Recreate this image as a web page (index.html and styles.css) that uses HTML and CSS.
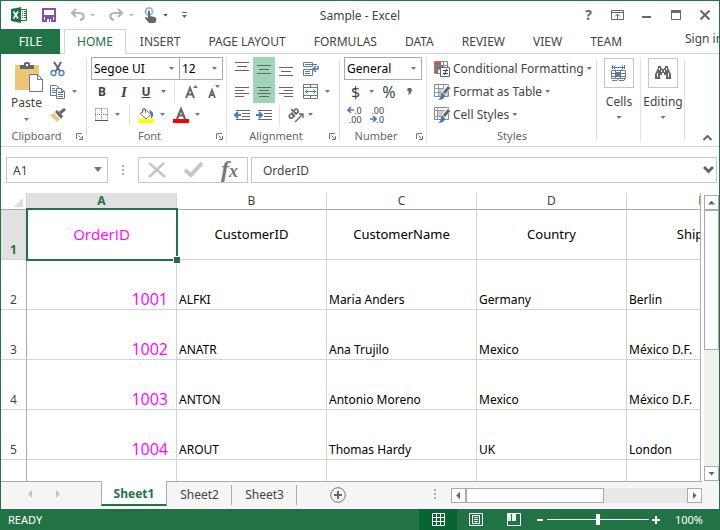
FILE: index.html
```html
<!DOCTYPE html>
<html lang="en">
<head>
<meta charset="utf-8">
<title>Sample - Excel</title>
<link rel="stylesheet" href="styles.css">
</head>
<body>
<div class="window">
  <header class="titlebar">
    <div class="quick">
      <svg class="logo" width="17" height="16" viewBox="0 0 17 16"><path fill="#217346" d="M0 2 10 0v16L0 14z"/><path fill="none" stroke="#217346" d="M10 2.500h5.500v11H10"/><path stroke="#217346" d="M11 4.500h1m1 0h2M11 6.500h1m1 0h2M11 8.500h1m1 0h2M11 10.500h1m1 0h2"/><path stroke="#fff" stroke-width="1.600" d="m2.500 4.500 4.500 7M7 4.500l-4.500 7"/></svg>
      <button class="qbtn" aria-label="Save"><svg width="14" height="14" viewBox="0 0 14 14"><path fill="none" stroke="#8250a8" stroke-width="2" d="M1 1h12v12H1z"/><path fill="#8250a8" d="M1 7h12v2H1zM3 9h8v4H3z"/><path fill="#fff" d="M5 11h2v3H5zM8 11h1v3H8z"/></svg></button>
      <button class="qbtn split" aria-label="Undo"><svg width="15" height="14" viewBox="0 0 15 14"><path fill="none" stroke="#b4b4b4" stroke-width="2.200" d="M6 1 2 5l4 4M2 5h7c6 0 6 6 1 7"/></svg><i class="caret pale"></i></button>
      <button class="qbtn split" aria-label="Redo"><svg width="15" height="14" viewBox="0 0 15 14"><path fill="none" stroke="#b4b4b4" stroke-width="2.200" d="m9 1 4 4-4 4M13 5H6C0 5 0 11 5 12"/></svg><i class="caret pale"></i></button>
      <button class="qbtn split touch" aria-label="Touch mode"><svg width="13" height="16" viewBox="0 0 13 16"><circle cx="5" cy="4.500" r="3.500" fill="none" stroke="#9dbbd8" stroke-width="2"/><path fill="#666" d="M4 4q1-1 2 0v5l5 1q2 1 1 4l-1 2H5L1 11q0-1 1-1l2 1z"/></svg><i class="caret dark"></i></button>
      <button class="qbtn" aria-label="Customize"><svg width="6" height="6" viewBox="0 0 6 6"><path fill="#666" d="M0 0h5v1H0zM0 3h5L2.500 6z"/></svg></button>
    </div>
    <div class="caption">Sample - Excel</div>
    <div class="wincontrols">
      <button class="help" aria-label="Help">?</button>
      <button aria-label="Ribbon options"><svg width="13" height="10" viewBox="0 0 13 10"><path fill="none" stroke="#666" d="M.5.5h12v9H.5zM1 2.500h11M6.500 9V4M4 6.500l2.500-2.500L9 6.500"/></svg></button>
      <button aria-label="Minimize"><svg width="10" height="10" viewBox="0 0 10 10"><path fill="#666" d="M0 6h9v2H0z"/></svg></button>
      <button aria-label="Maximize"><svg width="10" height="10" viewBox="0 0 10 10"><path fill="none" stroke="#666" d="M.5.5h9v9H.5z"/><path fill="#666" d="M0 0h10v3H0z"/></svg></button>
      <button aria-label="Close"><svg width="10" height="10" viewBox="0 0 10 10"><path stroke="#666" stroke-width="2" d="m.5.5 9 9M9.500.5l-9 9"/></svg></button>
    </div>
  </header>

  <nav class="tabs">
    <button class="file">FILE</button>
    <button class="tab active">HOME</button>
    <button class="tab">INSERT</button>
    <button class="tab">PAGE LAYOUT</button>
    <button class="tab">FORMULAS</button>
    <button class="tab">DATA</button>
    <button class="tab">REVIEW</button>
    <button class="tab">VIEW</button>
    <button class="tab">TEAM</button>
    <a class="signin" href="#">Sign in</a>
  </nav>

  <section class="ribbon">
    <div class="group clipboard">
      <div class="body clipbody">
        <button class="paste"><svg width="28" height="31" viewBox="0 0 28 31"><path fill="#eec679" d="M0 3h24v25H0z"/><path fill="#666" d="M5 3h4V1q3-2 6 0v2h4v4H5z"/><path fill="#fff" d="M11 2h2v2h-2z"/><path fill="#fff" stroke="#777" d="M14.500 12.500h8l5 5v12h-13z"/><path fill="none" stroke="#777" d="M22.500 12.500v5h5"/></svg><span>Paste</span><i class="caret"></i></button>
        <div class="rows">
          <div class="row"><button aria-label="Cut"><svg width="16" height="16" viewBox="0 0 16 16"><path stroke="#666" stroke-width="2" d="m4 1 6 9M11 1 6 10"/><g fill="none" stroke="#4a7eb0" stroke-width="1.300"><circle cx="3.500" cy="12" r="2.500"/><circle cx="11.500" cy="12" r="2.500"/></g></svg></button></div>
          <div class="row"><button class="split" aria-label="Copy"><svg width="16" height="14" viewBox="0 0 16 14"><path fill="#fff" stroke="#777" d="M.5.5h6l3 3v7h-9z"/><path stroke="#4a7eb0" d="M2 3.500h3M2 5.500h4M2 7.500h4"/><path fill="#fff" stroke="#777" d="M6.500 3.500h5l3 3v7h-8z"/><path fill="none" stroke="#777" d="M11.500 3.500v3h3"/><path stroke="#4a7eb0" d="M8 7.500h5M8 9.500h5M8 11.500h5"/></svg><i class="caret"></i></button></div>
          <div class="row"><button aria-label="Format painter"><svg width="16" height="14" viewBox="0 0 16 14"><path fill="#eec679" d="m0 7 4-2 6 6-3 3z"/><path fill="#666" d="m5 4 2-2 6 6-2 3z"/><path stroke="#fff" d="m4.500 4.500 6 6.500"/><path stroke="#666" stroke-width="3" d="m10 5 5-4"/></svg></button></div>
        </div>
      </div>
      <div class="foot"><span>Clipboard</span><button class="launch" aria-label="Clipboard settings"><svg width="7" height="7" viewBox="0 0 7 7"><path fill="none" stroke="#777" d="M.5 6V.5H6M2.500 2.500l3 3M6.500 3v3.500H3"/></svg></button></div>
    </div>

    <div class="group font">
      <div class="body">
        <div class="row pickers">
          <label class="pick family"><select aria-label="Font"><option>Segoe UI</option></select></label>
          <label class="pick size"><select aria-label="Font size"><option>12</option></select></label>
        </div>
        <div class="row styles-row">
          <button class="letter bold">B</button><button class="letter italic">I</button><button class="letter underline">U</button><i class="caret"></i>
          <span class="rule"></span>
          <button aria-label="Grow font"><svg width="14" height="14" viewBox="0 0 14 14"><path fill="none" stroke="#666" stroke-width="2" d="m1 13 4-10L9 13M2.500 9.500h5"/><path fill="#4a7eb0" d="m8 3 2.500-3L13 3z"/></svg></button>
          <button class="shrink" aria-label="Shrink font"><svg width="13" height="14" viewBox="0 0 13 14"><path fill="none" stroke="#666" stroke-width="1.800" d="m1 13 3-8L7 13M2 10h4"/><path fill="#4a7eb0" d="m7 0 2.500 3L12 0z"/></svg></button>
        </div>
        <div class="row fill-row">
          <button class="split" aria-label="Borders"><svg width="14" height="14" viewBox="0 0 14 14"><path fill="none" stroke="#777" stroke-dasharray="1 1" d="M.5.5h12v12M.5.5v12M6.500 0v12M0 6.500h13"/><path stroke="#555" d="M0 12.500h13"/></svg><i class="caret"></i></button>
          <span class="rule"></span>
          <button class="split" aria-label="Fill color"><svg width="16" height="16" viewBox="0 0 16 16"><path fill="#fff" stroke="#777" d="m2 6.500 5-4 6 5-5 4.500z"/><path fill="none" stroke="#777" d="M4.500 6V2q1.500-2 3 0v4"/><path fill="#4a7eb0" d="M11 3q5 1 4 6l-2 3V8z"/><path fill="#ff0" d="M0 12h16v4H0z"/></svg><i class="caret"></i></button>
          <button class="split" aria-label="Font color"><svg width="16" height="16" viewBox="0 0 16 16"><path fill="none" stroke="#666" stroke-width="2.200" d="m4 12 4-10 4 10M5.500 8.500h5"/><path fill="red" d="M0 12h16v4H0z"/></svg><i class="caret"></i></button>
        </div>
      </div>
      <div class="foot"><span>Font</span><button class="launch" aria-label="Font settings"><svg width="7" height="7" viewBox="0 0 7 7"><path fill="none" stroke="#777" d="M.5 6V.5H6M2.500 2.500l3 3M6.500 3v3.500H3"/></svg></button></div>
    </div>

    <div class="group align">
      <div class="body">
        <div class="row">
          <button class="al" aria-label="Top align"><svg width="15" height="14" viewBox="0 0 15 14"><path stroke="#666" d="M0 .5h14M2 4.500h10M0 8.500h14" /></svg></button>
          <button class="al on" aria-label="Middle align"><svg width="15" height="14" viewBox="0 0 15 14"><path stroke="#666" d="M0 3.500h14M2 7.500h10M0 11.500h14"/></svg></button>
          <button class="al" aria-label="Bottom align"><svg width="15" height="14" viewBox="0 0 15 14"><path stroke="#666" d="M0 5.500h14M2 9.500h10M0 13.500h14"/></svg></button>
          <button aria-label="Wrap text"><svg width="16" height="16" viewBox="0 0 16 16"><path fill="none" stroke="#777" d="M.5 1.500h9v4h-9zM.5 8.500h9v6h-9z"/><path fill="none" stroke="#4a7eb0" d="M2 3.500h12M2 10.500h5M2 12.500h5"/><path fill="none" stroke="#4a7eb0" stroke-width="1.500" d="M15 5v3h-4m2-3-3 3 3 3"/></svg></button>
        </div>
        <div class="row">
          <button class="al" aria-label="Align left"><svg width="15" height="14" viewBox="0 0 15 14"><path stroke="#666" d="M0 2.500h14M0 5.500h9M0 8.500h14M0 11.500h9"/></svg></button>
          <button class="al on" aria-label="Center"><svg width="15" height="14" viewBox="0 0 15 14"><path stroke="#666" d="M0 2.500h14M2 5.500h10M0 8.500h14M2 11.500h10"/></svg></button>
          <button class="al" aria-label="Align right"><svg width="15" height="14" viewBox="0 0 15 14"><path stroke="#666" d="M0 2.500h14M5 5.500h9M0 8.500h14M5 11.500h9"/></svg></button>
          <button class="split" aria-label="Merge and center"><svg width="15" height="15" viewBox="0 0 15 15"><path fill="none" stroke="#777" d="M.5.5h14v14H.5zM0 3.500h15M0 11.500h15M7.500 0v3M7.500 12v3"/><path fill="none" stroke="#4a7eb0" d="M2 7.500h11M4.500 5.500l-2 2 2 2M10.500 5.500l2 2-2 2"/></svg><i class="caret"></i></button>
        </div>
        <div class="row">
          <button class="al" aria-label="Decrease indent"><svg width="16" height="12" viewBox="0 0 16 12"><path stroke="#666" d="M2 1.500h14M8 4.500h8M8 7.500h8M2 10.500h14"/><path fill="none" stroke="#4a7eb0" stroke-width="2" d="M7 6H1m3-3L1 6l3 3"/></svg></button>
          <button class="al" aria-label="Increase indent"><svg width="16" height="12" viewBox="0 0 16 12"><path stroke="#666" d="M2 1.500h14M8 4.500h8M8 7.500h8M2 10.500h14"/><path fill="none" stroke="#4a7eb0" stroke-width="2" d="M0 6h6M3 3l3 3-3 3"/></svg></button>
          <span class="rule"></span>
          <button class="split orient" aria-label="Orientation"><svg width="16" height="16" viewBox="0 0 16 16"><g transform="rotate(-45 5 6)" fill="none" stroke="#666" stroke-width="1.500"><circle cx="1.500" cy="7" r="2"/><path d="M4 4.500V10M6.500 2v7.500"/><circle cx="8.500" cy="7" r="2"/></g><path fill="none" stroke="#666" stroke-width="1.300" d="m7 15 8-8m-4 0h4v4"/></svg><i class="caret"></i></button>
        </div>
      </div>
      <div class="foot"><span>Alignment</span><button class="launch" aria-label="Alignment settings"><svg width="7" height="7" viewBox="0 0 7 7"><path fill="none" stroke="#777" d="M.5 6V.5H6M2.500 2.500l3 3M6.500 3v3.500H3"/></svg></button></div>
    </div>

    <div class="group number">
      <div class="body">
        <div class="row"><label class="pick format"><select aria-label="Number format"><option>General</option></select></label></div>
        <div class="row symbols"><button class="split">$<i class="caret"></i></button><button>%</button><button class="comma" aria-label="Comma style"><svg width="5" height="7" viewBox="0 0 5 7"><path fill="#666" d="M1 0h3l1 2-1 3-3 2 1-3-2-2z"/></svg></button></div>
        <div class="row decimals">
          <button aria-label="Increase decimal"><span><svg width="7" height="6" viewBox="0 0 7 6"><path fill="none" stroke="#4a7eb0" stroke-width="1.600" d="M7 3H1m3-3L1 3l3 3"/></svg>.0</span><span>.00</span></button>
          <button aria-label="Decrease decimal"><span>.00</span><span><svg width="7" height="6" viewBox="0 0 7 6"><path fill="none" stroke="#4a7eb0" stroke-width="1.600" d="M0 3h6M3 0l3 3-3 3"/></svg>.0</span></button>
        </div>
      </div>
      <div class="foot"><span>Number</span><button class="launch" aria-label="Number settings"><svg width="7" height="7" viewBox="0 0 7 7"><path fill="none" stroke="#777" d="M.5 6V.5H6M2.500 2.500l3 3M6.500 3v3.500H3"/></svg></button></div>
    </div>

    <div class="group styles">
      <div class="body">
        <div class="row"><button class="split wide"><svg width="16" height="16" viewBox="0 0 16 16"><path fill="#fff" stroke="#888" d="M.5.5h13v12H.5zM0 4.500h14M0 8.500h14M9.500 0v8"/><path fill="#d9532c" d="M1 1h6v3H1zM1 9h3v3H1z"/><path fill="#4a7eb0" d="M1 5h8v3H1z"/><path fill="#fff" stroke="#666" d="M6.500 6.500h9v9h-9z"/><path fill="none" stroke="#444" d="M9 9.500h5M9 12.500h5M13 8l-3 6"/></svg>Conditional Formatting<i class="caret"></i></button></div>
        <div class="row"><button class="split wide"><svg width="16" height="16" viewBox="0 0 16 16"><path fill="#fff" stroke="#888" d="M.5.5h14v12H.5z"/><path fill="#b9cfe6" d="M5 5h9v7H5z"/><path fill="none" stroke="#999" d="M0 4.500h15M0 8.500h15M4.500 0v12M9.500 0v12"/><path stroke="#fff" stroke-width="5" d="m9 10 6-8"/><path stroke="#666" stroke-width="3" d="m10 9 5-6"/><path fill="#4a7eb0" d="m8 8 3 3q0 5-7 5 3-2 3-6z"/></svg>Format as Table<i class="caret"></i></button></div>
        <div class="row"><button class="split wide"><svg width="16" height="16" viewBox="0 0 16 16"><path fill="#fff" stroke="#888" d="M.5.5h14v12H.5z"/><path fill="#b9cfe6" d="M4 4h8v6H4z"/><path fill="none" stroke="#999" d="M0 3.500h15M3.500 0v12M0 9.500h10M12.500 0v8"/><path stroke="#fff" stroke-width="5" d="m9 10 6-8"/><path stroke="#666" stroke-width="3" d="m10 9 5-6"/><path fill="#4a7eb0" d="m8 8 3 3q0 5-7 5 3-2 3-6z"/></svg>Cell Styles<i class="caret"></i></button></div>
      </div>
      <div class="foot"><span>Styles</span></div>
    </div>

    <div class="group big">
      <button class="tall"><span class="frame"><svg width="16" height="17" viewBox="0 0 16 17"><path fill="none" stroke="#4a7eb0" d="M1.500 0v4M13.500 0v4M2 2.500h11M4.500.5l-2 2 2 2M10.500.5l2 2-2 2"/><path fill="#fff" stroke="#777" d="M.5 5.500h14v8H.5zM0 8.500h15M0 11.500h15M4.500 5v9M9.500 5v9"/><path fill="#4a7eb0" d="M4 7h6v5H4z"/><path fill="none" stroke="#777" d="M1 15.500h5l1-1 1 1h5l1-2"/></svg></span><span>Cells</span><i class="caret"></i></button>
    </div>
    <div class="group big">
      <button class="tall"><span class="frame"><svg width="16" height="14" viewBox="0 0 16 14"><path fill="#666" d="M3 0h3v2h1v1h2V2h1V0h3v2l3 6v5h-5V9H9V7H7v2H5v4H0V8l3-6z"/><path stroke="#fff" d="M2.500 7v4M6.500 4v2M9.500 4v2M13.500 7v4M4.500 2v2M11.500 2v2"/></svg></span><span>Editing</span><i class="caret"></i></button>
    </div>
    <div class="collapse"><button aria-label="Collapse ribbon"><svg width="9" height="6" viewBox="0 0 9 6"><path fill="none" stroke="#666" stroke-width="2" d="m.5 5 4-4 4 4"/></svg></button></div>
  </section>

  <section class="formulabar">
    <label class="pick namebox"><select aria-label="Name box"><option>A1</option></select></label>
    <span class="dots"></span>
    <div class="fxbox">
      <button aria-label="Cancel"><svg width="18" height="16" viewBox="0 0 18 16"><path stroke="#c6c6c6" stroke-width="2.500" d="m1 1 16 14M16 1 1 15"/></svg></button>
      <button aria-label="Enter"><svg width="19" height="16" viewBox="0 0 19 16"><path fill="none" stroke="#c6c6c6" stroke-width="4" d="m1 8 6 5L18 1"/></svg></button>
      <button class="fx" aria-label="Insert function">f<small>x</small></button>
    </div>
    <div class="inputbox"><input aria-label="Formula" value="OrderID"><button aria-label="Expand"><svg width="11" height="8" viewBox="0 0 11 8"><path fill="none" stroke="#666" stroke-width="3" d="m1 1 4.500 4.500L10 1"/></svg></button></div>
  </section>

  <main class="gridarea">
    <div class="sheet">
      <table>
        <colgroup><col class="idx"><col><col><col><col><col></colgroup>
        <thead><tr><th class="corner"><svg width="9" height="9" viewBox="0 0 9 9"><path fill="#dcdcdc" d="M9 0v9H0z"/></svg></th><th class="sel">A</th><th>B</th><th>C</th><th>D</th><th>E</th></tr></thead>
        <tbody>
          <tr class="heads"><th class="sel">1</th><td class="key current">OrderID</td><td>CustomerID</td><td>CustomerName</td><td>Country</td><td>ShipCity</td></tr>
          <tr><th>2</th><td class="key">1001</td><td>ALFKI</td><td>Maria Anders</td><td>Germany</td><td>Berlin</td></tr>
          <tr><th>3</th><td class="key">1002</td><td>ANATR</td><td>Ana Trujilo</td><td>Mexico</td><td>México D.F.</td></tr>
          <tr><th>4</th><td class="key">1003</td><td>ANTON</td><td>Antonio Moreno</td><td>Mexico</td><td>México D.F.</td></tr>
          <tr><th>5</th><td class="key">1004</td><td>AROUT</td><td>Thomas Hardy</td><td>UK</td><td>London</td></tr>
          <tr><th></th><td></td><td></td><td></td><td></td><td></td></tr>
        </tbody>
      </table>
    </div>
    <div class="vscroll"><button aria-label="Scroll up"><i class="tri up"></i></button><div class="thumb"></div><button aria-label="Scroll down"><i class="tri down"></i></button></div>
  </main>

  <div class="sheetbar">
    <div class="arrows"><button aria-label="Previous sheet"><i class="tri left"></i></button><button aria-label="Next sheet"><i class="tri right"></i></button></div>
    <button class="stab active">Sheet1</button><button class="stab">Sheet2</button><button class="stab">Sheet3</button>
    <button class="add" aria-label="New sheet"><svg width="16" height="16" viewBox="0 0 16 16"><circle cx="8" cy="8" r="7.300" fill="none" stroke="#777"/><path stroke="#666" stroke-width="2" d="M4 8h8M8 4v8"/></svg></button>
    <span class="dots"></span>
    <div class="hscroll"><button aria-label="Scroll left"><i class="tri left"></i></button><div class="thumb"></div><button aria-label="Scroll right"><i class="tri right"></i></button></div>
  </div>

  <footer class="status">
    <span class="ready">READY</span>
    <button class="view on" aria-label="Normal view"><svg width="13" height="13" viewBox="0 0 13 13"><path fill="none" stroke="#fff" d="M.5.5h12v12H.5zM4.500 0v13M8.500 0v13M0 4.500h13M0 8.500h13"/></svg></button>
    <button class="view" aria-label="Page layout"><svg width="14" height="13" viewBox="0 0 14 13"><path fill="none" stroke="#fff" d="M.5.5h13v12H.5zM3.500 2.500h7v8h-7zM5 4.500h4M5 6.500h4M5 8.500h4"/></svg></button>
    <button class="view" aria-label="Page break preview"><svg width="14" height="13" viewBox="0 0 14 13"><path fill="none" stroke="#fff" d="M.5.5h13v12H.5z"/><path fill="#e8f1ec" d="M0 0h4v8H0zM5 0h4v8H5z"/></svg></button>
    <button class="zoom" aria-label="Zoom out"><svg width="8" height="8" viewBox="0 0 8 8"><path fill="#fff" d="M1 3h6v2H1z"/></svg></button>
    <input class="slider" type="range" aria-label="Zoom" value="50">
    <button class="zoom" aria-label="Zoom in"><svg width="8" height="8" viewBox="0 0 8 8"><path fill="#fff" d="M0 3h8v2H0zM3 0h2v8H3z"/></svg></button>
    <span class="percent">100%</span>
  </footer>
</div>
</body>
</html>
```
FILE: styles.css
```css
* { box-sizing: border-box; }
body { margin: 0; font: 12px/16px "Noto Sans", "Open Sans", sans-serif; color: #444; background: #fff; }
button { display: flex; align-items: center; justify-content: center; margin: 0; padding: 0; border: 0; background: none; font: inherit; color: inherit; white-space: nowrap; }
select, input { font: inherit; color: inherit; margin: 0; }
svg { display: block; flex: none; }
.window { display: flex; flex-direction: column; height: 100vh; border: 1px solid #217346; border-bottom: 0; overflow: hidden; }

.caret { flex: none; width: 5px; height: 3px; background: #777; clip-path: polygon(0 0, 100% 0, 50% 100%); }
.caret.pale { background: #b4b4b4; }
.caret.dark { background: #444; }
.split { gap: 5px; }
.rule { width: 1px; height: 22px; background: #e1e1e1; }

.titlebar { display: grid; grid-template-columns: 1fr auto 1fr; align-items: center; height: 28px; flex: none; }
.quick { display: flex; align-items: center; padding-left: 10px; }
.qbtn { margin-left: 14px; }
.qbtn.touch { gap: 6px; margin-left: 10px; }
.caption { padding-top: 1px; }
.wincontrols { display: flex; justify-content: flex-end; align-items: center; }
.wincontrols button { width: 29px; height: 24px; }
.wincontrols .help { font-size: 14px; font-weight: 700; color: #666; }

.tabs { display: flex; flex: none; height: 25px; border-bottom: 1px solid #d4d4d4; }
.tabs button { flex: none; height: 25px; padding: 1px 14px 0; }
.tabs .file { width: 59px; background: #217346; color: #fff; margin-right: 4px; }
.tabs .active { border: 1px solid #d4d4d4; border-bottom: 0; background: #fff; color: #217346; padding: 0 12px; }
.signin { margin-left: auto; width: 34px; flex: none; color: #444; text-decoration: none; white-space: nowrap; padding-top: 2px; }

.ribbon { display: flex; flex: none; height: 93px; border-bottom: 1px solid #d4d4d4; }
.group { display: flex; flex-direction: column; flex: none; padding: 3px 4px 0; position: relative; }
.group::after { content: ""; position: absolute; right: 0; top: 4px; bottom: 4px; width: 1px; background: #e1e1e1; }
.row { display: flex; align-items: center; height: 23px; }
.foot { display: flex; align-items: center; height: 24px; color: #666; font-size: 11px; }
.foot span { flex: 1; text-align: center; }
.foot span:not(:last-child) { padding-right: 8px; }
.clipboard { width: 86px; }
.clipbody { display: flex; }
.paste { flex-direction: column; justify-content: flex-start; width: 43px; padding-top: 5px; gap: 2px; }
.paste .caret { margin-top: 5px; }
.paste svg { margin-left: 4px; }
.rows .row { padding-left: 2px; }
.rows .split { gap: 6px; }

.font { width: 140px; }
.pick { position: relative; display: block; }
.pick::after { content: ""; position: absolute; right: 6px; top: 10px; width: 5px; height: 3px; background: #777; clip-path: polygon(0 0, 100% 0, 50% 100%); pointer-events: none; }
.pick select { appearance: none; display: block; width: 100%; height: 23px; border: 1px solid #ababab; border-radius: 0; background: #fff; padding: 0 2px; color: #000; }
.family { width: 89px; }
.size { width: 44px; margin-left: -1px; }
.letter { width: 22px; font-size: 12px; font-weight: 700; }
.letter.italic { font-family: "Liberation Serif", serif; font-style: italic; font-size: 15px; }
.letter.underline { text-decoration: underline; }
.styles-row .caret { margin-left: 4px; }
.styles-row .rule { margin: 0 10px 0 8px; }
.shrink { margin-left: 9px; }
.fill-row { padding-left: 4px; }
.fill-row .split { gap: 6px; }
.fill-row .rule { margin: 0 8px 0 9px; }
.fill-row .split + .split { margin-left: 8px; }

.align { width: 113px; }
.al { width: 22px; height: 23px; }
.al.on { background: #9fd5b7; }
.al + button:not(.al) { margin-left: 6px; }
.align .split { gap: 7px; }
.align .rule { margin: 0 8px 0 4px; }
.align .split.orient { gap: 4px; }

.number { width: 87px; }
.format { width: 78px; }
.symbols { font-size: 16px; padding-left: 7px; gap: 8px; }
.symbols .split { gap: 9px; }
.symbols .comma { margin-left: 4px; }
.decimals { padding-left: 3px; gap: 8px; font-size: 9px; line-height: 9px; }
.decimals button { flex-direction: column; align-items: flex-end; }
.decimals span { display: flex; align-items: center; }

.styles { width: 170px; }
.styles .wide { gap: 3px; padding-left: 3px; }

.big { width: 44px; padding: 4px 0 0; }
.tall { flex-direction: column; }
.frame { display: flex; align-items: center; justify-content: center; width: 30px; height: 30px; border: 1px solid #c6c6c6; margin-bottom: 6px; }
.tall .caret { margin-top: 6px; }
.collapse { display: flex; flex: 1; align-items: flex-end; justify-content: flex-end; padding: 0 7px 5px 0; }

.formulabar { display: flex; flex: none; align-items: center; height: 46px; padding: 0 2px 0 5px; background: #fff; }
.formulabar .pick select { height: 26px; border-color: #c6c6c6; padding: 2px 6px 0; color: #444; }
.namebox { width: 102px; }
.namebox.pick::after { top: 10px; width: 8px; height: 5px; }
.dots { width: 2px; height: 11px; margin: 0 14px; background: repeating-linear-gradient(#b0b0b0 0 2px, transparent 2px 4px); }
.fxbox { display: flex; align-items: center; justify-content: space-between; width: 110px; height: 26px; border: 1px solid #c6c6c6; padding: 0 9px; margin-right: 3px; }
.fx { align-items: baseline; font: italic 700 24px/20px "Liberation Serif", serif; color: #777; }
.fx small { font-size: 18px; }
.inputbox { display: flex; flex: 1; align-items: center; height: 26px; border: 1px solid #c6c6c6; padding: 0 2px 0 11px; }
.inputbox input { flex: 1; min-width: 0; border: 0; padding: 2px 0 0; outline: 0; background: none; }

.gridarea { display: flex; flex: 1; min-height: 0; }
.sheet { flex: 1; min-width: 0; overflow: hidden; border-right: 1px solid #ababab; }
table { width: 776px; table-layout: fixed; border-collapse: separate; border-spacing: 0; color: #000; }
col { width: 150px; }
col.idx { width: 26px; }
th { font-weight: 400; color: #444; padding: 0; }
thead th { height: 17px; line-height: 16px; border-right: 1px solid #d4d4d4; border-bottom: 1px solid #ababab; }
tbody th { vertical-align: bottom; border-right: 1px solid #ababab; border-bottom: 1px solid #d4d4d4; }
th.sel { background: #e1e1e1; color: #217346; font-weight: 700; }
.corner svg { margin: 3px 0 0 13px; }
td { height: 50px; padding: 0 2px 1px; vertical-align: bottom; border-right: 1px solid #d4d4d4; border-bottom: 1px solid #d4d4d4; white-space: nowrap; }
tbody th { padding-bottom: 1px; }
.key { color: #f0f; font-family: "Open Sans", "Noto Sans", sans-serif; font-size: 16px; line-height: 18px; text-align: right; padding-right: 8px; }
.heads td { text-align: center; vertical-align: middle; font-size: 13px; }
.heads .key { position: relative; font-size: 15px; padding-right: 2px; }
.current::before { content: ""; position: absolute; inset: -2px -2px -2px -1px; border: 2px solid #217346; }
.current::after { content: ""; position: absolute; right: -4px; bottom: -4px; width: 6px; height: 6px; background: #217346; border: solid #fff; border-width: 1px 0 0 1px; }

.tri { width: 7px; height: 4px; background: #666; }
.tri.up { clip-path: polygon(50% 0, 100% 100%, 0 100%); }
.tri.down { clip-path: polygon(0 0, 100% 0, 50% 100%); }
.tri.left, .tri.right { width: 4px; height: 8px; }
.tri.left { clip-path: polygon(100% 0, 100% 100%, 0 50%); }
.tri.right { clip-path: polygon(0 0, 100% 50%, 0 100%); }
.vscroll { display: flex; flex-direction: column; width: 15px; margin: 2px 0 0 3px; background: #f0f0f0; }
.vscroll button { height: 15px; border: 1px solid #ababab; background: #fff; }
.vscroll .thumb { height: 49%; border: 1px solid #ababab; background: #fff; }
.vscroll button:last-child, .hscroll button:last-child { margin-top: auto; }

.sheetbar { display: flex; flex: none; height: 28px; background: #f5f5f5; align-items: flex-start; box-shadow: inset -17px 0 #f5f5f5, inset 0 1px #ababab; }
.arrows { display: flex; width: 100px; height: 26px; align-items: center; padding-left: 27px; gap: 24px; }
.arrows .tri { background: #c6c6c6; }
.stab { width: 65px; height: 26px; position: relative; padding-top: 2px; }
.stab::after { content: ""; position: absolute; right: 0; top: 4px; bottom: 2px; width: 1px; background: #ababab; }
.stab.active { width: 66px; height: 25px; background: #fff; color: #217346; font-weight: 700; border: 1px solid #ababab; border-top: 0; border-bottom: 2px solid #217346; }
.stab.active::after { display: none; }
.add { width: 81px; height: 28px; }
.sheetbar .dots { margin: 8px 15px 0 auto; }
.hscroll { display: flex; width: 35%; height: 15px; margin: 7px 17px 0 0; background: #e8e8e8; }
.hscroll button { width: 15px; height: 15px; border: 1px solid #ababab; background: #fff; }
.hscroll button:last-child { margin: 0 0 0 auto; }
.hscroll .thumb { width: 55%; border: 1px solid #ababab; background: #fff; }

.status { display: flex; flex: none; align-items: center; height: 21px; background: #217346; color: #fff; font-size: 11px; padding-right: 16px; }
.ready { flex: 1; padding-left: 7px; }
.view { width: 38px; height: 21px; }
.view.on { background: #0a6332; }
.zoom { width: 14px; height: 20px; }
.slider { appearance: none; width: 102px; height: 20px; background: none; }
.slider::-webkit-slider-runnable-track { height: 1px; background: #fff; }
.slider::-webkit-slider-thumb { appearance: none; width: 4px; height: 11px; margin-top: -5px; background: #fff; }
.percent { width: 40px; text-align: right; }
```
